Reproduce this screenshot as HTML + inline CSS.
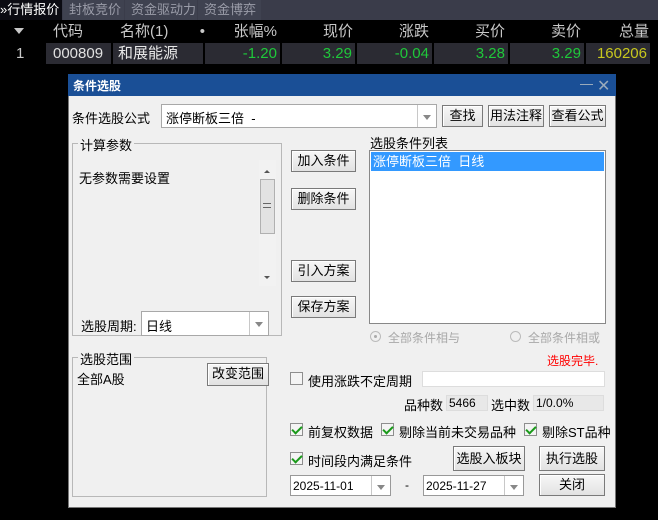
<!DOCTYPE html>
<html><head><meta charset="utf-8"><style>
*{margin:0;padding:0;box-sizing:border-box}
body{width:658px;height:520px;background:#000;position:relative;overflow:hidden;font-family:"Liberation Sans","Noto Sans CJK SC",sans-serif;font-size:12px;color:#000}
.a{position:absolute;white-space:nowrap}
.tab{position:absolute;top:0;height:20px;background:#3f4250;color:#9a9ca8;font-size:13px;line-height:20px;padding-left:6px}
.hd{position:absolute;top:21px;height:21px;color:#c8c8c8;font-size:15px;line-height:21px;text-align:right}
.cell{position:absolute;top:43px;height:21px;background:#2b2b33;font-size:15px;line-height:21px;text-align:right;color:#1fc83a;padding-right:3px}
.btn{position:absolute;background:linear-gradient(#f7f7f7,#e2e2e2);border:1px solid #7a7a7a;box-shadow:inset 1px 1px 0 #fff;text-align:center;font-size:13px;line-height:20px}
.box{position:absolute;background:#fff;border:1px solid #a8a8a8}
.grp{position:absolute;border:1px solid #b8b8b8}
.gl{position:absolute;background:#f0f0f0;padding:0 2px;font-size:13px}
.cb{position:absolute;width:13px;height:13px;border:1px solid #8e8e8e;background:#f4f4f4}
.cb.on::after{content:"";position:absolute;left:3px;top:0px;width:4px;height:8px;border:solid #1a9a1a;border-width:0 2px 2px 0;transform:rotate(45deg)}
.dd{position:absolute;top:0;right:0;width:19px;height:100%;border-left:1px solid #c8c8c8}
.dd::after{content:"";position:absolute;left:5px;top:45%;border:4px solid transparent;border-top:5px solid #888}
.t13{font-size:13px}
</style></head><body>
<div class="a" style="left:0;top:0;width:658px;height:20px;background:#3a3c4a"></div>
<div class="tab" style="left:0;width:62px;background:#0b0b12;color:#fff;padding-left:0">»行情报价</div>
<div class="tab" style="left:63px;width:61px">封板竞价</div>
<div class="tab" style="left:125px;width:72px">资金驱动力</div>
<div class="tab" style="left:198px;width:63px">资金博弈</div>
<div class="a" style="left:14px;top:28px;border:5px solid transparent;border-top:6px solid #c8c8c8"></div>
<div class="hd" style="left:46px;width:40px;text-align:left;left:53px">代码</div>
<div class="hd" style="left:120px;width:80px;text-align:left">名称(1)</div>
<div class="hd" style="left:195px;width:10px">•</div>
<div class="hd" style="left:205px;width:72px">张幅%</div>
<div class="hd" style="left:282px;width:71px">现价</div>
<div class="hd" style="left:357px;width:72px">涨跌</div>
<div class="hd" style="left:434px;width:71px">买价</div>
<div class="hd" style="left:510px;width:71px">卖价</div>
<div class="hd" style="left:585px;width:64px">总量</div>
<div class="a" style="left:16px;top:43px;color:#c8c8c8;font-size:15px;line-height:21px">1</div>
<div class="cell" style="left:46px;width:65px;color:#e0e0e0;text-align:left;padding-left:7px">000809</div>
<div class="cell" style="left:113px;width:90px;color:#e8e8e8;text-align:left;padding-left:5px">和展能源</div>
<div class="cell" style="left:205px;width:75px">-1.20</div>
<div class="cell" style="left:282px;width:73px">3.29</div>
<div class="cell" style="left:357px;width:75px">-0.04</div>
<div class="cell" style="left:434px;width:74px">3.28</div>
<div class="cell" style="left:510px;width:74px">3.29</div>
<div class="cell" style="left:586px;width:64px;color:#c8c81e">160206</div>

<div class="a" style="left:68px;top:74px;width:548px;height:434px;background:#f0f0f0;border:1px solid #777"></div>
<div class="a" style="left:68px;top:74px;width:548px;height:22px;background:#1a4f96"></div>
<div class="a" style="left:73px;top:77px;color:#fff;font-weight:bold;font-size:12px">条件选股</div>
<div class="a" style="left:580px;top:84px;width:13px;height:1px;background:#9ab"></div>
<div class="a" style="left:597px;top:76px;color:#9ab;font-size:16px">✕</div>

<div class="a t13" style="left:72px;top:108px">条件选股公式</div>
<div class="box" style="left:161px;top:104px;width:276px;height:24px"><span class="a t13" style="left:4px;top:3px">涨停断板三倍 &nbsp;-</span><div class="dd"></div></div>
<div class="btn" style="left:442px;top:105px;width:41px;height:22px">查找</div>
<div class="btn" style="left:488px;top:105px;width:56px;height:22px">用法注释</div>
<div class="btn" style="left:549px;top:105px;width:57px;height:22px">查看公式</div>

<div class="grp" style="left:72px;top:143px;width:210px;height:193px"></div>
<div class="gl" style="left:78px;top:135px">计算参数</div>
<div class="a t13" style="left:79px;top:168px">无参数需要设置</div>
<div class="a" style="left:259px;top:160px;width:17px;height:126px;background:#f2f2f2"></div>
<div class="a" style="left:260px;top:179px;width:15px;height:55px;background:#e2e2e2;border:1px solid #b0b0b0"></div>
<div class="a" style="left:263px;top:203px;width:8px;height:5px;border-top:1px solid #666;border-bottom:1px solid #666"></div>
<div class="a" style="left:264px;top:167px;border:3px solid transparent;border-bottom:3px solid #555"></div>
<div class="a" style="left:264px;top:276px;border:3px solid transparent;border-top:3px solid #555"></div>
<div class="a t13" style="left:81px;top:316px">选股周期:</div>
<div class="box" style="left:141px;top:311px;width:128px;height:25px"><span class="a t13" style="left:4px;top:4px">日线</span><div class="dd"></div></div>

<div class="btn" style="left:291px;top:150px;width:65px;height:22px">加入条件</div>
<div class="btn" style="left:291px;top:188px;width:65px;height:22px">删除条件</div>
<div class="btn" style="left:291px;top:260px;width:65px;height:22px">引入方案</div>
<div class="btn" style="left:291px;top:296px;width:65px;height:22px">保存方案</div>

<div class="a t13" style="left:370px;top:133px">选股条件列表</div>
<div class="box" style="left:369px;top:150px;width:237px;height:174px;border-color:#888"></div>
<div class="a" style="left:371px;top:152px;width:233px;height:19px;background:#3399ff;color:#fff;font-size:13px;line-height:19px;padding-left:2px">涨停断板三倍 &nbsp;日线</div>
<div class="a" style="left:370px;top:331px;width:11px;height:11px;border:1px solid #bbb;border-radius:50%"></div>
<div class="a" style="left:374px;top:335px;width:3px;height:3px;background:#aaa;border-radius:50%"></div>
<div class="a" style="left:388px;top:329px;color:#a8a8a8">全部条件相与</div>
<div class="a" style="left:510px;top:331px;width:11px;height:11px;border:1px solid #bbb;border-radius:50%"></div>
<div class="a" style="left:528px;top:329px;color:#a8a8a8">全部条件相或</div>

<div class="grp" style="left:72px;top:357px;width:195px;height:140px"></div>
<div class="gl" style="left:78px;top:349px">选股范围</div>
<div class="a t13" style="left:77px;top:369px">全部A股</div>
<div class="btn" style="left:207px;top:363px;width:62px;height:23px">改变范围</div>

<div class="a" style="left:547px;top:352px;color:#f00;font-size:12px">选股完毕.</div>
<div class="cb" style="left:290px;top:372px"></div>
<div class="a t13" style="left:308px;top:371px">使用涨跌不定周期</div>
<div class="box" style="left:422px;top:371px;width:183px;height:16px;border-color:#ddd"></div>
<div class="a t13" style="left:404px;top:395px">品种数</div>
<div class="a" style="left:446px;top:395px;width:42px;height:16px;background:#e8e8e8;border:1px solid #ddd;font-size:12px;padding-left:2px">5466</div>
<div class="a t13" style="left:491px;top:395px">选中数</div>
<div class="a" style="left:533px;top:395px;width:71px;height:16px;background:#e8e8e8;border:1px solid #ddd;font-size:12px;padding-left:2px">1/0.0%</div>

<div class="cb on" style="left:290px;top:423px"></div>
<div class="a t13" style="left:308px;top:422px">前复权数据</div>
<div class="cb on" style="left:381px;top:423px"></div>
<div class="a t13" style="left:399px;top:422px">剔除当前未交易品种</div>
<div class="cb on" style="left:524px;top:423px"></div>
<div class="a t13" style="left:542px;top:422px">剔除ST品种</div>

<div class="cb on" style="left:290px;top:452px"></div>
<div class="a t13" style="left:308px;top:451px">时间段内满足条件</div>
<div class="btn" style="left:453px;top:446px;width:72px;height:25px;line-height:23px">选股入板块</div>
<div class="btn" style="left:539px;top:446px;width:66px;height:25px;line-height:23px">执行选股</div>

<div class="box" style="left:290px;top:475px;width:101px;height:21px;border-color:#999"><span class="a" style="left:2px;top:3px;font-size:12px">2025-11-01</span><div class="dd"></div></div>
<div class="a" style="left:405px;top:478px">-</div>
<div class="box" style="left:423px;top:475px;width:101px;height:21px;border-color:#999"><span class="a" style="left:2px;top:3px;font-size:12px">2025-11-27</span><div class="dd"></div></div>
<div class="btn" style="left:539px;top:474px;width:66px;height:22px">关闭</div>
</body></html>
